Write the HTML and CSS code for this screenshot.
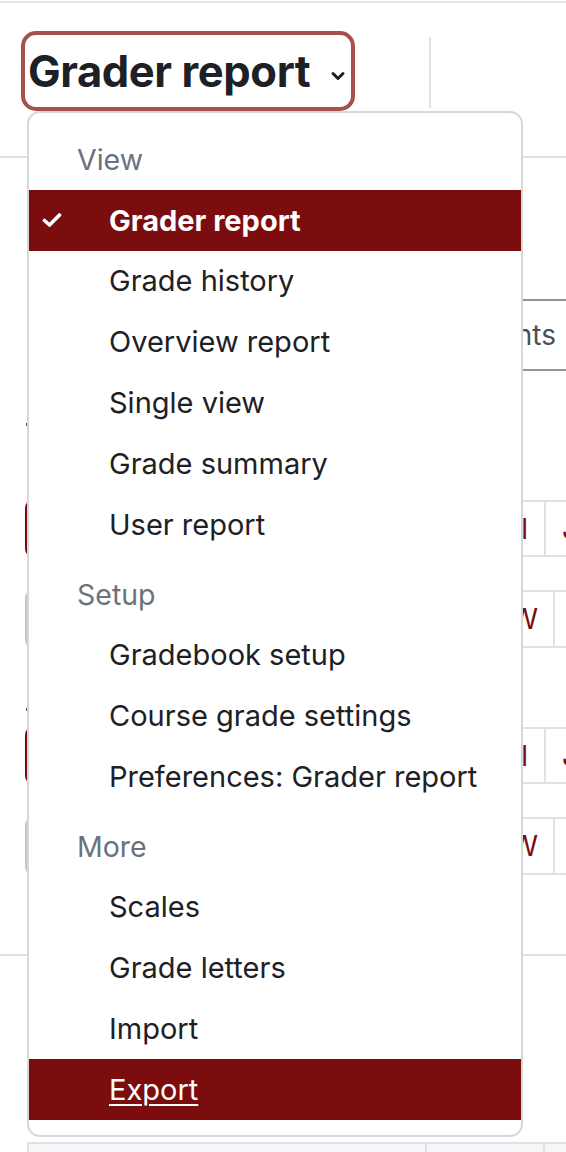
FILE: index.html
```html
<!DOCTYPE html>
<html lang="en">
<head>
<meta charset="utf-8">
<title>Grader report</title>
<link rel="stylesheet" href="styles.css">
</head>
<body>
<div class="page">
  <header class="topbar">
    <div class="title-btn">
      <span class="title">Grader report</span>
      <svg class="chev" viewBox="0 0 16 12" width="16" height="12"><path d="M3 3.5 L8 8.5 L13 3.5" fill="none" stroke="#1d2125" stroke-width="3" stroke-linecap="round" stroke-linejoin="round"/></svg>
    </div>
    <div class="vdivider"></div>
  </header>

  <main class="content">
    <div class="filter-row">
      <div class="filter-box">All participants</div>
    </div>

    <div class="dot d1"></div>
    <div class="trow first r1">
      <div class="lbtn red"></div>
      <div class="cells">
        <div class="cell c1"><span class="link">Paul</span></div>
        <div class="cell c2"><span class="link">J</span></div>
      </div>
    </div>
    <div class="trow second">
      <div class="lbtn gray"></div>
      <div class="cells">
        <div class="cell c3"><span class="link">W</span></div>
        <div class="cell c4"></div>
      </div>
    </div>

    <div class="dot d2"></div>
    <div class="trow first r3">
      <div class="lbtn red"></div>
      <div class="cells">
        <div class="cell c1"><span class="link">Paul</span></div>
        <div class="cell c2"><span class="link">J</span></div>
      </div>
    </div>
    <div class="trow second">
      <div class="lbtn gray"></div>
      <div class="cells">
        <div class="cell c3"><span class="link">W</span></div>
        <div class="cell c4"></div>
      </div>
    </div>

    <div class="hline"></div>

    <div class="footer-row">
      <div class="fcell f1"></div>
      <div class="fcell f2"></div>
      <div class="fcell f3"></div>
    </div>
  </main>

  <nav class="menu">
    <div class="mhead">View</div>
    <a class="mitem active"><svg class="check" viewBox="0 0 20 16" width="20" height="16"><path d="M2.5 8.5 L7.5 13 L17.5 3" fill="none" stroke="#fff" stroke-width="3.6" stroke-linecap="round" stroke-linejoin="round"/></svg>Grader report</a>
    <a class="mitem">Grade history</a>
    <a class="mitem">Overview report</a>
    <a class="mitem">Single view</a>
    <a class="mitem">Grade summary</a>
    <a class="mitem">User report</a>
    <div class="mhead">Setup</div>
    <a class="mitem">Gradebook setup</a>
    <a class="mitem">Course grade settings</a>
    <a class="mitem">Preferences: Grader report</a>
    <div class="mhead">More</div>
    <a class="mitem">Scales</a>
    <a class="mitem">Grade letters</a>
    <a class="mitem">Import</a>
    <a class="mitem focus"><span class="u">Export</span></a>
  </nav>
</div>
</body>
</html>
```

FILE: styles.css
```css
* { box-sizing: border-box; }
html, body { margin: 0; padding: 0; background: #fff; }
body {
  font-family: Inter, "Noto Sans", "Liberation Sans", sans-serif;
  color: #1d2125;
  overflow: hidden;
  width: 566px;
  height: 1152px;
}
.page {
  position: relative;
  width: 566px;
  height: 1151px;
  border-top: 2px solid #e3e4e6;
  margin-top: 1px;
  overflow: hidden;
}

/* top bar */
.topbar {
  height: 155px;
  border-bottom: 2px solid #dee2e6;
  display: flex;
  align-items: flex-start;
  padding-left: 21px;
  padding-top: 28px;
}
.title-btn {
  width: 334px;
  height: 80px;
  border: 4px solid #a5524e;
  border-radius: 15px;
  display: flex;
  align-items: center;
  padding-left: 3px;
  flex-shrink: 0;
}
.title {
  font-size: 43.5px;
  font-weight: 700;
  letter-spacing: -0.4px;
  line-height: 1;
  color: #1d2125;
  margin-top: 2px;
  white-space: nowrap;
}
.chev { margin-left: 20px; margin-top: 10px; flex-shrink: 0; }
.vdivider {
  width: 2px;
  height: 71px;
  background: #dee2e6;
  margin-left: 74px;
  margin-top: 6px;
}

/* content */
.content { display: flex; flex-direction: column; }
.filter-row {
  display: flex;
  justify-content: flex-end;
  margin-top: 141px;
  margin-right: -40px;
}
.filter-box {
  width: 340px;
  height: 72px;
  border: 2px solid #8f959e;
  border-radius: 8px;
  display: flex;
  align-items: center;
  justify-content: flex-end;
  padding-right: 48px;
  font-size: 28px;
  color: #495057;
  white-space: nowrap;
}
.dot {
  width: 3px;
  height: 3px;
  background: #555;
  margin-left: 26px;
}
.dot.d1 { margin-top: 52px; }
.dot.d2 { margin-top: 60px; }
.trow.r1 { margin-top: 74px; }
.trow.r3 { margin-top: 16px; }
.trow {
  display: flex;
  align-items: stretch;
}
.trow.first { height: 57px; }
.trow.second { height: 58px; margin-top: 33px; }
.lbtn {
  margin-left: 25px;
  width: 200px;
  border-radius: 8px;
}
.lbtn.red { background: #7c0d0e; }
.lbtn.gray { border: 2px solid #c3c6cb; }
.cells {
  margin-left: auto;
  display: flex;
  border-top: 2px solid #dee2e6;
  border-bottom: 2px solid #dee2e6;
}
.cell {
  display: flex;
  align-items: center;
  font-size: 28px;
  color: #7c0d0e;
  overflow: hidden;
  white-space: nowrap;
}
.cell.c1 { width: 106px; justify-content: flex-end; padding-right: 16px; border-right: 2px solid #dee2e6; }
.cell.c2 { width: 20px; padding-left: 16px; }
.cell.c3 { width: 115px; justify-content: flex-end; padding-right: 15px; border-right: 2px solid #dee2e6; }
.cell.c4 { width: 11px; }
.hline {
  height: 2px;
  background: #dee2e6;
  margin-top: 79px;
}
.footer-row {
  display: flex;
  margin-top: 186px;
  margin-left: 27px;
  height: 30px;
  background: #f5f6f8;
  border-top: 2px solid #dee2e6;
  border-left: 2px solid #dee2e6;
}
.fcell { height: 100%; }
.f1 { width: 398px; border-right: 2px solid #dee2e6; }
.f2 { width: 118px; border-right: 2px solid #dee2e6; }
.f3 { flex: 1; }

/* dropdown menu (overlay) */
.menu {
  position: absolute;
  left: 27px;
  top: 108px;
  width: 496px;
  background: #fff;
  border: 2px solid #d6d7da;
  border-radius: 13px;
  padding-top: 7px;
  padding-bottom: 15.5px;
  display: flex;
  flex-direction: column;
}
.mhead {
  height: 69.8px;
  padding-left: 48px;
  padding-top: 10px;
  display: flex;
  align-items: center;
  font-size: 28.5px;
  color: #6a737b;
  flex-shrink: 0;
}
.mitem {
  height: 60.8px;
  display: flex;
  align-items: center;
  padding-left: 80px;
  font-size: 29px;
  color: #1d2125;
  text-decoration: none;
  position: relative;
  white-space: nowrap;
  flex-shrink: 0;
}
.mitem.active {
  background: #7c0d0e;
  color: #fff;
  font-weight: 700;
}
.mitem.focus {
  background: #7c0d0e;
  color: #fff;
}
.mitem .u { text-decoration: underline; text-underline-offset: 4px; text-decoration-thickness: 2px; }
.check {
  position: absolute;
  left: 13px;
  top: 22px;
}
```
